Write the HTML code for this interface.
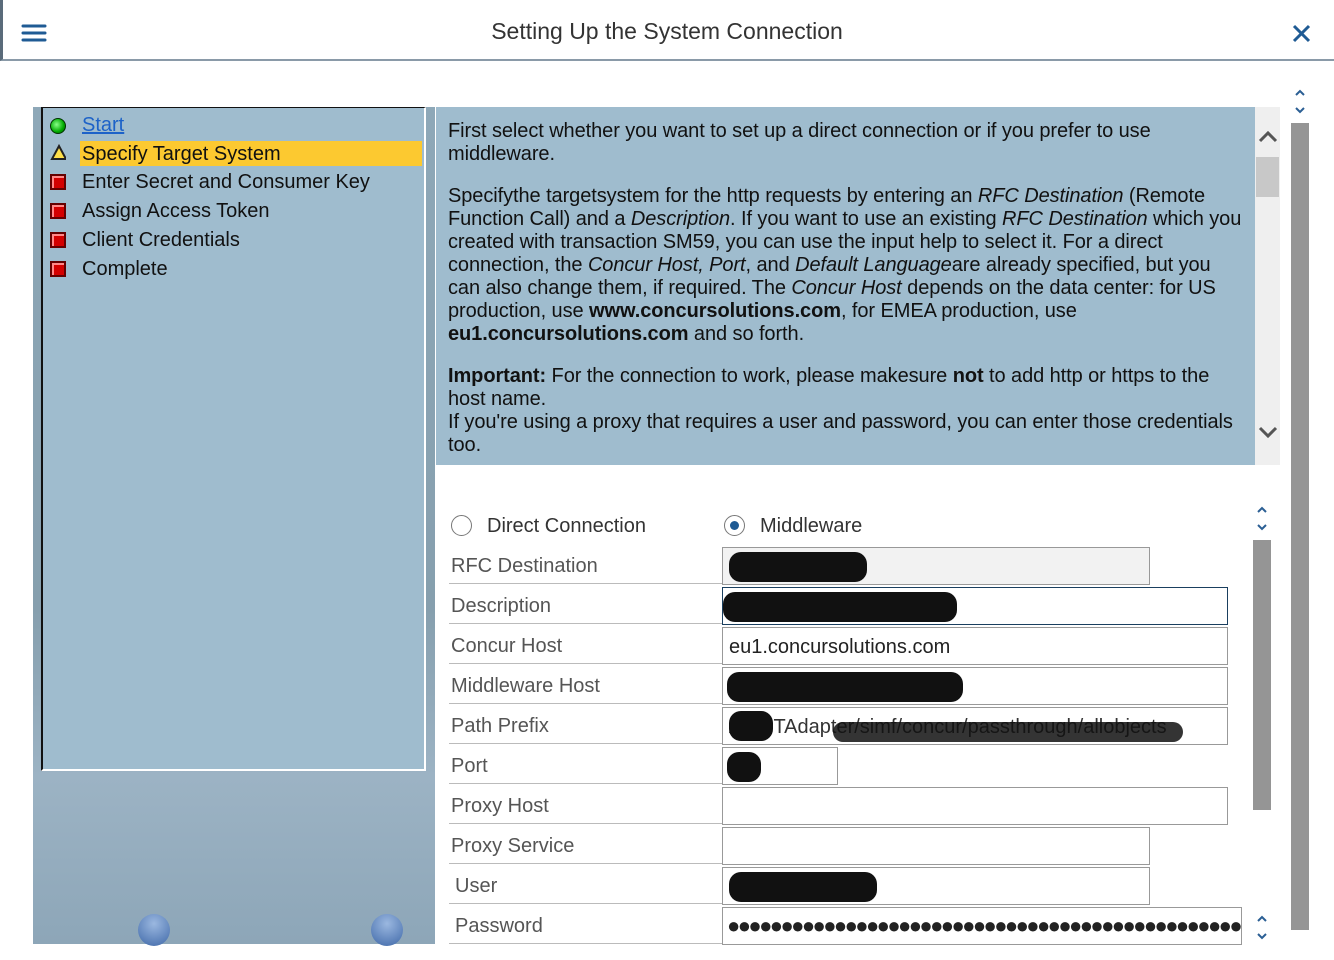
<!DOCTYPE html>
<html><head><meta charset="utf-8"><style>
*{margin:0;padding:0;box-sizing:border-box}
body{width:1334px;height:960px;overflow:hidden;background:#fff;font-family:"Liberation Sans",Arial,sans-serif;position:relative}
.a{position:absolute}
.hdr{left:0;top:0;width:1334px;height:61px;border-bottom:2px solid #8a9aa8;border-left:3px solid #5a6b7a}
.title{left:0;width:1334px;top:18px;text-align:center;font-size:23px;color:#333}
.list{left:41px;top:107px;width:385px;height:664px;background:#9fbcce;border-left:2px solid #111;border-top:1px solid #111;border-right:2px solid #fff;border-bottom:2px solid #fff}
.li{position:absolute;left:39px;font-size:20px;color:#111;line-height:24px}
.ico{position:absolute;left:7px;width:16px;height:16px}
.red{background:#d40000;border:2px solid #600;box-shadow:inset 2px 2px 0 #f88}
.help{left:436px;top:107px;width:819px;height:358px;background:#9fbcce;padding:13px 12px;font-size:20px;line-height:23px;color:#111;letter-spacing:-0.08px}
.help p{margin-bottom:19px}
.lbl{left:451px;font-size:20px;color:#555;font-family:"Liberation Sans Narrow","Liberation Sans",sans-serif}
.line{left:449px;width:273px;height:1px;background:#bbb}
.inp{left:722px;height:38px;border:1px solid #999;background:#fff;font-size:20px;padding:8px 6px;color:#222}
.blot{position:absolute;background:#111;border-radius:12px;top:4px;height:30px}
</style></head><body>
<div class="a hdr"></div>
<svg class="a" style="left:21px;top:24px" width="26" height="18"><g stroke="#1f5b94" stroke-width="3" stroke-linecap="round"><line x1="2" y1="2" x2="24" y2="2"/><line x1="2" y1="9" x2="24" y2="9"/><line x1="2" y1="16" x2="24" y2="16"/></g></svg>
<div class="a title">Setting Up the System Connection</div>
<svg class="a" style="left:1292px;top:24px" width="20" height="20"><g stroke="#1f5b94" stroke-width="3"><line x1="2" y1="2" x2="17" y2="17"/><line x1="17" y1="2" x2="2" y2="17"/></g></svg>

<div class="a" style="left:33px;top:107px;width:402px;height:837px;background:linear-gradient(#8ea8b8,#869fae 60%,#9cb3c4 80%,#8da6b8)"></div>
<div class="a list">
<div class="ico" style="top:10px;border-radius:50%;background:radial-gradient(circle at 40% 40%,#8f8,#0a0 60%,#050);border:1px solid #030"></div>
<div class="li" style="top:5px;color:#1d62c8;text-decoration:underline">Start</div>
<div class="a" style="left:37px;top:33px;width:342px;height:25px;background:#fcc930"></div>
<svg class="ico" style="top:36px" width="18" height="18"><polygon points="9,2 16,15 2,15" fill="#ffe04a" stroke="#222" stroke-width="2"/></svg>
<div class="li" style="top:34px">Specify Target System</div>
<div class="ico red" style="top:66px"></div><div class="li" style="top:62px">Enter Secret and Consumer Key</div>
<div class="ico red" style="top:95px"></div><div class="li" style="top:91px">Assign Access Token</div>
<div class="ico red" style="top:124px"></div><div class="li" style="top:120px">Client Credentials</div>
<div class="ico red" style="top:153px"></div><div class="li" style="top:149px">Complete</div>
</div>
<div class="a" style="left:138px;top:914px;width:32px;height:32px;border-radius:50%;background:radial-gradient(circle at 50% 30%,#9bb8e0,#3f68a8)"></div>
<div class="a" style="left:371px;top:914px;width:32px;height:32px;border-radius:50%;background:radial-gradient(circle at 50% 30%,#9bb8e0,#3f68a8)"></div>

<div class="a help">
<p>First select whether you want to set up a direct connection or if you prefer to use middleware.</p>
<p>Specifythe targetsystem for the http requests by entering an <i>RFC Destination</i> (Remote Function Call) and a <i>Description</i>. If you want to use an existing <i>RFC Destination</i> which you created with transaction SM59, you can use the input help to select it. For a direct connection, the <i>Concur Host, Port</i>, and <i>Default Language</i>are already specified, but you can also change them, if required. The <i>Concur Host</i> depends on the data center: for US production, use <b>www.concursolutions.com</b>, for EMEA production, use <b>eu1.concursolutions.com</b> and so forth.</p>
<p style="margin:0"><b>Important:</b> For the connection to work, please makesure <b>not</b> to add http or https to the host name.<br>If you're using a proxy that requires a user and password, you can enter those credentials too.</p>
</div>
<div class="a" style="left:1255px;top:107px;width:25px;height:358px;background:#efefef"></div>
<div class="a" style="left:1256px;top:157px;width:23px;height:40px;background:#c8c8c8"></div>
<svg class="a" style="left:1258px;top:130px" width="20" height="14"><polyline points="2,11 10,3 18,11" fill="none" stroke="#555" stroke-width="3"/></svg>
<svg class="a" style="left:1258px;top:425px" width="20" height="14"><polyline points="2,3 10,11 18,3" fill="none" stroke="#555" stroke-width="3"/></svg>

<svg class="a" style="left:1294px;top:88px" width="12" height="28"><g fill="none" stroke="#2b5f94" stroke-width="2"><polyline points="2,7 6,3 10,7"/><polyline points="2,20 6,24 10,20"/></g></svg>
<div class="a" style="left:1291px;top:123px;width:18px;height:807px;background:#959595"></div>
<svg class="a" style="left:1256px;top:505px" width="12" height="28"><g fill="none" stroke="#2b5f94" stroke-width="2"><polyline points="2,7 6,3 10,7"/><polyline points="2,20 6,24 10,20"/></g></svg>
<div class="a" style="left:1253px;top:540px;width:18px;height:270px;background:#959595"></div>
<svg class="a" style="left:1256px;top:914px" width="12" height="28"><g fill="none" stroke="#2b5f94" stroke-width="2"><polyline points="2,7 6,3 10,7"/><polyline points="2,20 6,24 10,20"/></g></svg>

<div class="a" style="left:451px;top:515px;width:21px;height:21px;border:1px solid #777;border-radius:50%"></div>
<div class="a lbl" style="left:487px;top:515px;color:#333">Direct Connection</div>
<div class="a" style="left:724px;top:515px;width:21px;height:21px;border:1px solid #777;border-radius:50%"><div style="margin:5px;width:9px;height:9px;border-radius:50%;background:#1f5b94"></div></div>
<div class="a lbl" style="left:760px;top:515px;color:#333">Middleware</div>

<div class="a lbl" style="top:555px">RFC Destination</div><div class="a line" style="top:583px"></div>
<div class="a inp" style="top:547px;width:428px;background:#f2f2f2"><div class="blot" style="left:6px;width:138px"></div></div>
<div class="a lbl" style="top:595px">Description</div><div class="a line" style="top:623px"></div>
<div class="a inp" style="top:587px;width:506px;border-color:#1a3f5f"><div class="blot" style="left:0;width:234px"></div></div>
<div class="a lbl" style="top:635px">Concur Host</div><div class="a line" style="top:663px"></div>
<div class="a inp" style="top:627px;width:506px">eu1.concursolutions.com</div>
<div class="a lbl" style="top:675px">Middleware Host</div><div class="a line" style="top:703px"></div>
<div class="a inp" style="top:667px;width:506px"><div class="blot" style="left:4px;width:236px"></div></div>
<div class="a lbl" style="top:715px">Path Prefix</div><div class="a line" style="top:743px"></div>
<div class="a inp" style="top:707px;width:506px;color:#333">/&nbsp;&nbsp;&nbsp;&nbsp;&nbsp;&nbsp;&nbsp;TAdapter/simf/concur/passthrough/allobjects<div class="blot" style="left:6px;width:44px;top:3px"></div><div class="blot" style="left:110px;width:350px;top:14px;height:20px;opacity:.85"></div></div>
<div class="a lbl" style="top:755px">Port</div><div class="a line" style="top:783px"></div>
<div class="a inp" style="top:747px;width:116px"><div class="blot" style="left:4px;width:34px"></div></div>
<div class="a lbl" style="top:795px">Proxy Host</div><div class="a line" style="top:823px"></div>
<div class="a inp" style="top:787px;width:506px"></div>
<div class="a lbl" style="top:835px">Proxy Service</div><div class="a line" style="top:863px"></div>
<div class="a inp" style="top:827px;width:428px"></div>
<div class="a lbl" style="top:875px;left:455px">User</div><div class="a line" style="top:903px"></div>
<div class="a inp" style="top:867px;width:428px"><div class="blot" style="left:6px;width:148px"></div></div>
<div class="a lbl" style="top:915px;left:455px">Password</div><div class="a line" style="top:943px"></div>
<div class="a inp" style="top:907px;width:520px;padding:5px 4px;font-size:22px;letter-spacing:-2.6px;overflow:hidden;white-space:nowrap">●●●●●●●●●●●●●●●●●●●●●●●●●●●●●●●●●●●●●●●●●●●●●●●●●●●●●●</div>
</body></html>
